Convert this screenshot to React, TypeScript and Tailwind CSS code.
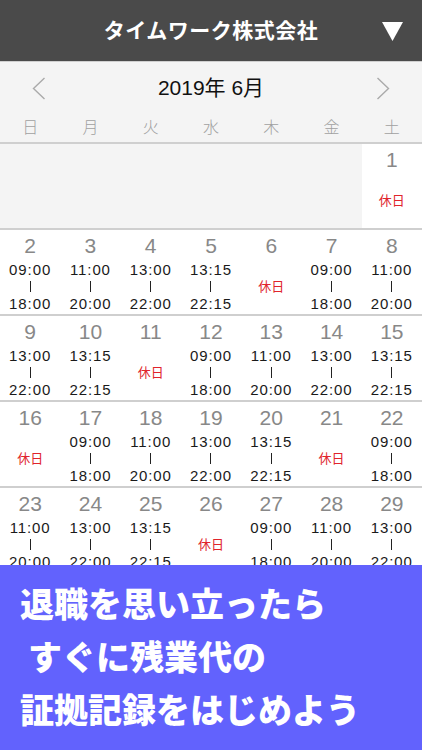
import React from "react";

const SHIFTS: (string[] | null)[] = [
  null,
  ["09:00", "18:00"],
  ["11:00", "20:00"],
  ["13:00", "22:00"],
  ["13:15", "22:15"],
];

const WEEKDAYS = ["日", "月", "火", "水", "木", "金", "土"];

const FONT = "font-['Liberation_Sans','Noto_Sans_CJK_JP',sans-serif]";

function DayCell({ day }: { day: number | null }) {
  if (day === null) {
    return <div className="bg-[#f4f4f4]" />;
  }
  const shift = SHIFTS[(day - 1) % 5];
  return (
    <div className="flex flex-col items-center bg-white pt-[3px]">
      <div className="h-[26px] text-[21px] leading-[26px] text-[#888]">{day}</div>
      <div className="mt-[2px] flex h-[51px] flex-col items-center justify-center">
        {shift ? (
          <>
            <span className="text-[15px] leading-[17px] tracking-[0.9px] text-[#1a1a1a]">{shift[0]}</span>
            <span className="flex h-[17px] items-center">
              <span className="h-[11px] w-px bg-[#222]" />
            </span>
            <span className="text-[15px] leading-[17px] tracking-[0.9px] text-[#1a1a1a]">{shift[1]}</span>
          </>
        ) : (
          <span className="text-[13px] leading-[17px] text-[#e0242c]">休日</span>
        )}
      </div>
    </div>
  );
}

export default function App() {
  // June 2019 starts on Saturday
  const cells: (number | null)[] = [...Array(6).fill(null), ...Array.from({ length: 30 }, (_, i) => i + 1)];
  const weeks: (number | null)[][] = [];
  for (let i = 0; i < cells.length; i += 7) weeks.push(cells.slice(i, i + 7));

  return (
    <div className={`flex h-[750px] w-[422px] flex-col overflow-hidden bg-white ${FONT}`}>
      {/* Header */}
      <div className="relative flex h-[61px] shrink-0 items-center justify-center bg-[#4a4a4a]">
        <span className="text-[21px] font-bold tracking-[0.5px] text-white">タイムワーク株式会社</span>
        <svg className="absolute right-[19px] top-[22px]" width="21" height="19" viewBox="0 0 21 19">
          <path d="M0 0 H21 L10.5 19 Z" fill="#fff" />
        </svg>
      </div>

      {/* Month nav + weekdays */}
      <div className="shrink-0 border-t border-[#cfcfcf] border-b-2 bg-[#f4f4f4]">
        <div className="flex h-[52px] items-center justify-between px-[32px]">
          <svg width="14" height="23" viewBox="0 0 14 23">
            <path d="M12.5 1 L1.5 11.5 L12.5 22" fill="none" stroke="#aaa" strokeWidth="1.4" />
          </svg>
          <span className="text-[21px] leading-[30px] text-[#111]">2019年 6月</span>
          <svg width="14" height="23" viewBox="0 0 14 23">
            <path d="M1.5 1 L12.5 11.5 L1.5 22" fill="none" stroke="#aaa" strokeWidth="1.4" />
          </svg>
        </div>
        <div className="grid h-[28px] grid-cols-7 items-center">
          {WEEKDAYS.map((w) => (
            <span key={w} className="text-center text-[16px] font-light leading-[20px] text-[#a0a0a0]">
              {w}
            </span>
          ))}
        </div>
      </div>

      {/* Calendar rows */}
      <div className="min-h-0 flex-1 overflow-hidden">
        {weeks.map((week, wi) => (
          <div key={wi} className="grid h-[86px] grid-cols-7 border-b-2 border-[#cfcfcf]">
            {week.map((d, di) => (
              <DayCell key={di} day={d} />
            ))}
          </div>
        ))}
      </div>

      {/* Banner */}
      <div className="flex h-[185px] shrink-0 flex-col justify-center gap-[19px] bg-[#6262fd] pb-[4px] pl-[20px] font-['Noto_Sans_CJK_JP',sans-serif] text-[34px] font-black leading-[34px] text-white">
        <p>退職を思い立ったら</p>
        <p className="pl-[8px]">すぐに残業代の</p>
        <p>証拠記録をはじめよう</p>
      </div>
    </div>
  );
}
